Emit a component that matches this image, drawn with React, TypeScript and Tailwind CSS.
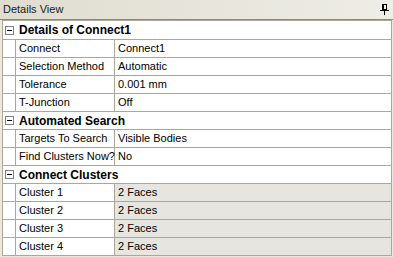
import React from "react";

type Row =
  | { kind: "group"; label: string }
  | { kind: "prop"; name: string; value: string; readonly?: boolean };

const rows: Row[] = [
  { kind: "group", label: "Details of Connect1" },
  { kind: "prop", name: "Connect", value: "Connect1" },
  { kind: "prop", name: "Selection Method", value: "Automatic" },
  { kind: "prop", name: "Tolerance", value: "0.001 mm" },
  { kind: "prop", name: "T-Junction", value: "Off" },
  { kind: "group", label: "Automated Search" },
  { kind: "prop", name: "Targets To Search", value: "Visible Bodies" },
  { kind: "prop", name: "Find Clusters Now?", value: "No" },
  { kind: "group", label: "Connect Clusters" },
  { kind: "prop", name: "Cluster 1", value: "2 Faces", readonly: true },
  { kind: "prop", name: "Cluster 2", value: "2 Faces", readonly: true },
  { kind: "prop", name: "Cluster 3", value: "2 Faces", readonly: true },
  { kind: "prop", name: "Cluster 4", value: "2 Faces", readonly: true },
];

const PinIcon = () => (
  <svg width="9" height="11" viewBox="0 0 9 11" shapeRendering="crispEdges">
    <rect x="2.5" y="0.5" width="4" height="5" fill="none" stroke="#000" />
    <rect x="2" y="0" width="2" height="6" fill="#000" />
    <rect x="0" y="6" width="9" height="1" fill="#000" />
    <rect x="4" y="7" width="1" height="4" fill="#000" />
  </svg>
);

const MinusBox = () => (
  <div className="w-[9px] h-[9px] border border-[#808080] bg-white flex items-center justify-center">
    <div className="w-[5px] h-px bg-black" />
  </div>
);

export default function App() {
  return (
    <div
      className="w-[393px] h-[257px] bg-[#ece9d8] text-[11px] text-black overflow-hidden"
      style={{ fontFamily: "Tahoma, 'Liberation Sans', Arial, sans-serif" }}
    >
      <div className="h-[20px] flex items-center justify-between pl-[3px] pr-[4px] bg-gradient-to-r from-[#dfddd0] to-[#eeede6] border-b border-[#8c8a7e]">
        <span className="text-[#1a1a1a]">Details View</span>
        <PinIcon />
      </div>
      <div className="ml-[2px] w-[390px] border-t border-l border-r border-[#aca899] bg-white">
        {rows.map((r, i) =>
          r.kind === "group" ? (
            <div
              key={i}
              className={`flex items-center border-b border-[#aca899] ${i === 0 ? "h-[19px]" : "h-[18px]"}`}
            >
              <div className="w-[13px] flex justify-center">
                <MinusBox />
              </div>
              <span className="pl-[3px] font-bold text-[12px]">{r.label}</span>
            </div>
          ) : (
            <div key={i} className="flex h-[18px] border-b border-[#aca899]">
              <div className="w-[13px] border-r border-[#aca899]" />
              <div className="w-[99px] border-r border-[#aca899] pl-[3px] flex items-center whitespace-nowrap">
                {r.name}
              </div>
              <div
                className={`flex-1 pl-[3px] flex items-center ${r.readonly ? "bg-[#e6e5e0]" : "bg-white"}`}
              >
                {r.value}
              </div>
            </div>
          )
        )}
      </div>
    </div>
  );
}
